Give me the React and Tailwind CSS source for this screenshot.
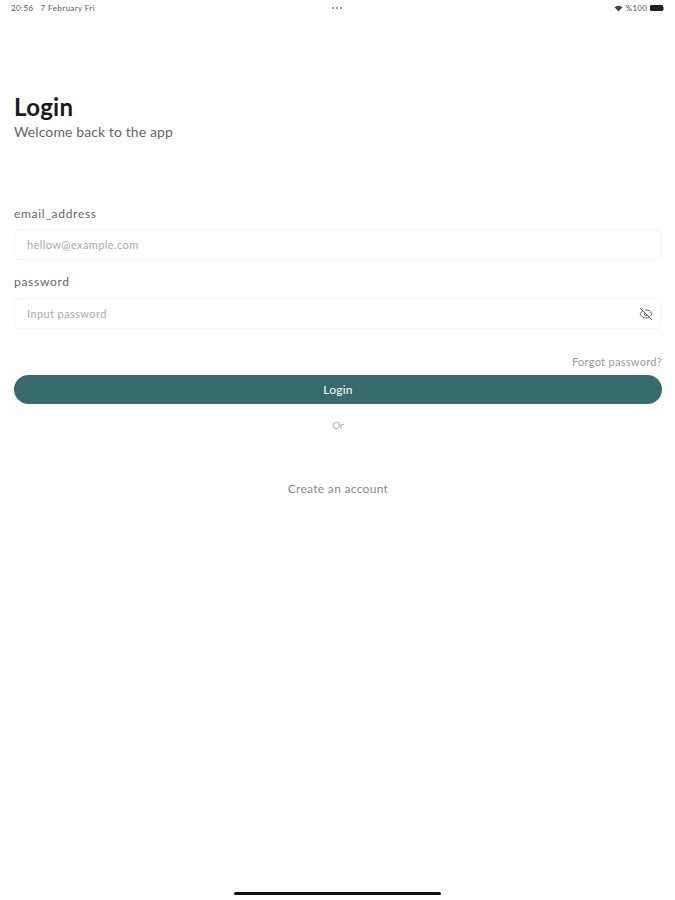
import React from "react";
import { EyeOff } from "lucide-react";

export default function App() {
  return (
    <div className="w-[675px] h-[900px] bg-white flex flex-col overflow-hidden font-['Lato','Noto_Sans',sans-serif]">
      <div className="h-[16px] px-[11px] grid grid-cols-3 items-center text-[8px] text-[#555] shrink-0">
        <div className="flex gap-[7px] tracking-[0.4px]">
          <span>20:56</span>
          <span>7 February Fri</span>
        </div>
        <div className="flex justify-center gap-[2px]">
          <span className="w-[2px] h-[2px] rounded-full bg-[#777]"></span>
          <span className="w-[2px] h-[2px] rounded-full bg-[#777]"></span>
          <span className="w-[2px] h-[2px] rounded-full bg-[#777]"></span>
        </div>
        <div className="flex justify-end items-center gap-[3px]">
          <svg width="9" height="7" viewBox="0 0 9 7">
            <path d="M0.5 2.2 A6 6 0 0 1 8.5 2.2 L4.5 6.6 Z" fill="#444" />
          </svg>
          <span className="tracking-[0.2px]">%100</span>
          <span className="flex items-center">
            <span className="w-[13px] h-[6px] rounded-[1px] bg-[#222]"></span>
            <span className="w-[1px] h-[3px] bg-[#888]"></span>
          </span>
        </div>
      </div>

      <div className="pl-[14px] pr-[13px] flex flex-col flex-1">
        <h1 className="mt-[78px] h-[26px] leading-[26px] text-[24px] font-bold text-[#1a1a1a] tracking-[0.3px]">Login</h1>
        <p className="mt-[2px] h-[20px] leading-[20px] text-[14px] text-[#666] tracking-[0.1px]">Welcome back to the app</p>

        <label className="mt-[63px] h-[18px] leading-[18px] text-[12px] text-[#666] tracking-[0.7px]">email_address</label>
        <div className="mt-[6px] h-[31px] rounded-[5px] border border-[#f3f3f3] px-[12px] pt-[2px] flex items-center text-[11px] text-[#aaa] tracking-[0.4px]">
          hellow@example.com
        </div>

        <label className="mt-[13px] h-[18px] leading-[18px] text-[12px] text-[#666] tracking-[0.7px]">password</label>
        <div className="mt-[7px] h-[31px] rounded-[5px] border border-[#f3f3f3] pl-[12px] pr-[8px] flex items-center justify-between text-[11px] text-[#aaa] tracking-[0.4px]">
          <span className="pt-[2px]">Input password</span>
          <EyeOff size={14} strokeWidth={1.5} className="text-[#555]" />
        </div>

        <div className="mt-[26px] h-[14px] leading-[14px] text-right text-[11px] text-[#999] tracking-[0.3px]">Forgot password?</div>
        <button className="mt-[6px] h-[29px] w-full rounded-full bg-[#376a6d] text-white text-[12px] tracking-[0.2px] flex items-center justify-center">
          Login
        </button>
        <div className="mt-[15px] h-[12px] leading-[12px] text-center text-[10px] text-[#aaa]">Or</div>
        <div className="mt-[50px] h-[16px] leading-[16px] text-center text-[12px] text-[#888] tracking-[0.3px]">Create an account</div>
      </div>

      <div className="h-[8px] flex justify-center shrink-0">
        <div className="w-[207px] h-[3px] rounded-full bg-[#111]"></div>
      </div>
    </div>
  );
}
